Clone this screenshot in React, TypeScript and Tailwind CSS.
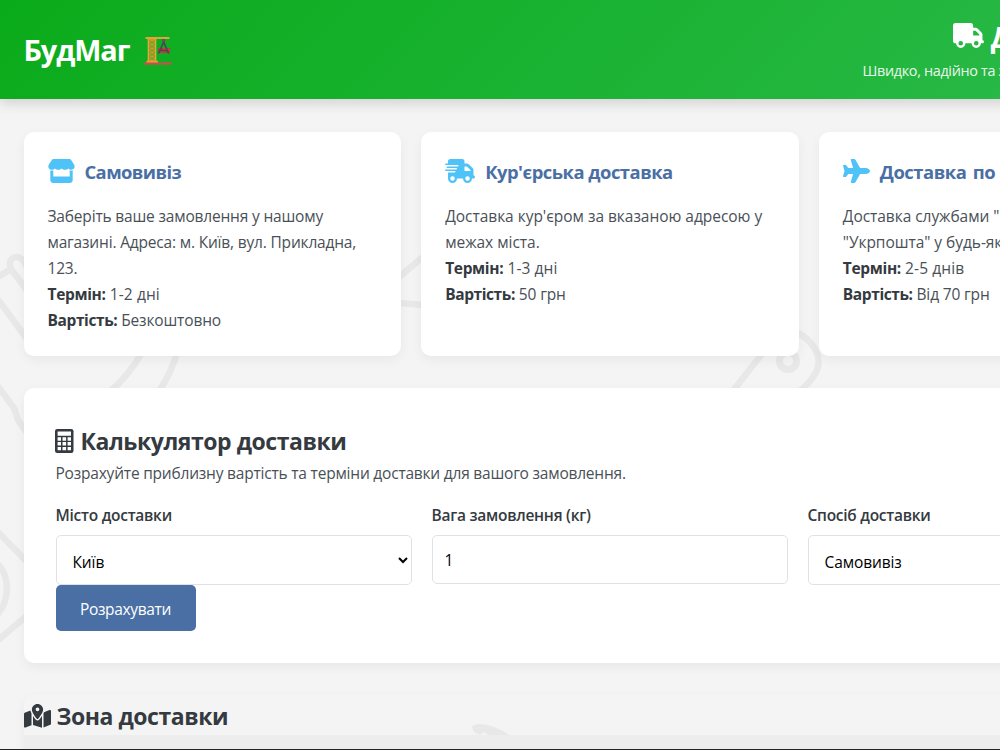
import type { ReactNode } from "react";
import { FaMapLocationDot, FaPlane, FaTruck, FaTruckFast } from "react-icons/fa6";

const methods = [
  {
    title: "Самовивіз",
    icon: <StoreIcon />,
    lines: ["Заберіть ваше замовлення у нашому", "магазині. Адреса: м. Київ, вул. Прикладна,", "123."],
    titleTracking: "tracking-[-0.6px]",
    tracking: "tracking-[-0.18px]",
    term: "1-2 дні",
    price: "Безкоштовно",
  },
  {
    title: "Кур'єрська доставка",
    icon: <FaTruckFast className="h-6 w-[30px]" />,
    lines: ["Доставка кур'єром за вказаною адресою у", "межах міста."],
    titleTracking: "tracking-[-0.5px]",
    tracking: "tracking-[-0.03px]",
    term: "1-3 дні",
    price: "50 грн",
  },
  {
    title: "Доставка по Україні",
    icon: <FaPlane className="h-6 w-[27px]" />,
    lines: ['Доставка службами "Нова пошта" або', '"Укрпошта" у будь-яке місто України.'],
    titleTracking: "tracking-[-0.45px] [word-spacing:2px]",
    tracking: "tracking-[-0.05px]",
    term: "2-5 днів",
    price: "Від 70 грн",
  },
];

function StoreIcon() {
  return (
    <svg viewBox="0 0 27 24" className="h-6 w-[27px]" fill="currentColor">
      <path d="M5.4 0h16.2c.6 0 1.1.3 1.4.8l3 4.8c1.5 2.3.2 5-2.5 5.2-1.3.1-2.4-.4-3.2-1.3-.7.8-1.8 1.3-3.3 1.3-1.4 0-2.6-.5-3.4-1.3-.8.8-2 1.3-3.4 1.3-1.5 0-2.6-.5-3.4-1.3-.8.9-1.9 1.4-3.3 1.3C.8 10.6-.5 7.9.9 5.6L4 .8c.3-.5.8-.8 1.4-.8z" />
      <path d="M2.3 11.3c.9.4 2 .4 3 .1v6.100h16.400v-6.100c1 .3 2 .3 3-.1V21c0 1.700-1.300 3-3 3H5.300c-1.700 0-3-1.300-3-3z" />
    </svg>
  );
}

function CalculatorIcon() {
  return (
    <svg viewBox="0 0 19 24" className="-ml-px h-6 w-[19px]">
      <rect width="18.5" height="24" rx="2.2" fill="#343a40" />
      <path
        d="M2.6 2.5H16v4.2H2.6zM2.6 8.3H6v3.4H2.6zM7.5 8.3h3.6v3.4H7.5zM12.6 8.3H16v3.4h-3.4zM2.6 13.1H6v3.4H2.6zM7.5 13.1h3.6v3.4H7.5zM12.6 13.1H16v3.4h-3.4zM2.6 17.9H6v3.4H2.6zM7.5 17.9h3.6v3.4H7.5zM12.6 17.9H16v3.4h-3.4z"
        fill="#fff"
      />
    </svg>
  );
}

function CraneIcon() {
  return (
    <svg viewBox="0 0 30 30" className="mt-1 ml-[14px] h-[30px] w-[30px]">
      <path d="M15 12h12v5H15z" fill="#c33a3f" />
      <path d="M5 3h8v23H5z" fill="#c99a2b" />
      <path d="M5.5 4.5l7 4-7 4 7 4-7 4 7 4M12.5 4.5l-7 4 7 4-7 4 7 4-7 4" fill="none" stroke="#5fa32a" strokeWidth="0.9" />
      <path d="M5.3 3v23M12.7 3v23" stroke="#e8ab35" strokeWidth="1.2" />
      <path d="M2.5 1h24v2h-24z" fill="#e3a432" />
      <path d="M3.5 24.8H15v2H3.5z" fill="#e3a432" />
      <path d="M.8 26.600h28v2H.8z" fill="#dd4650" />
      <path d="M20.6 3v3" stroke="#4b5b62" strokeWidth="3" />
      <path d="M20.6 6l-5 11.500M20.6 6l5 11.500M17 14l8 1" fill="none" stroke="#4a4652" strokeWidth="1.7" />
    </svg>
  );
}

// Faint outlines of tools behind the content
function ToolsPattern() {
  return (
    <svg viewBox="0 0 1000 750" className="absolute inset-0 -z-10 h-[750px] w-[1000px]" fill="none" stroke="#e8e8e8" strokeWidth="6.5">
      <path d="M-4 278L11 269C6 257 19 253 24 262L32 276M11 269L34 300M-6 294L30 343" />
      <path d="M-6 381L14 408L18 420L32 440" />
      <path d="M142 352Q130 375 108 393M177 352Q173 370 158 393" />
      <path d="M398 278L424 256M398 303L424 305" />
      <path d="M772 341L732 392M796 332C815 341 822 358 817 370Q812 382 798 392" />
      <circle cx="788" cy="361" r="8.5" strokeWidth="7" />
      <path d="M-4 530L30 565M-4 562C10 575 11 600 -4 616M-4 642L30 613" />
      <path d="M474 732L472 727Q474 724 480 724Q496 725 509 735L488 735L484 732L480 735Z" fill="#e8e8e8" stroke="none" />
    </svg>
  );
}

function Field({ label, children }: { label: string; children: ReactNode }) {
  return (
    <div className="flex w-[356px] flex-col items-start">
      <label className="mb-[7px] leading-[25.5px] font-semibold tracking-[-0.26px] text-[#343a40]">{label}</label>
      {children}
    </div>
  );
}

export default function App() {
  return (
    <div className="relative isolate h-[750px] w-[1000px] overflow-hidden bg-[#f4f4f4] font-['Open_Sans','Noto_Sans',sans-serif] text-[15.5px] whitespace-nowrap text-[#495057]">
      <ToolsPattern />
      <div className="w-[1220px]">
        <header className="flex h-[98.5px] items-center justify-between bg-linear-[135deg,#0aab1a,#2dbb4e] px-[23.5px] text-white shadow-[0_4px_12px_rgba(0,0,0,0.15)]">
          <div className="flex items-center">
            <span className="text-[28.8px] font-bold tracking-[-1.05px]">БудМаг</span>
            <CraneIcon />
          </div>
          <div className="flex w-[334px] flex-col items-center">
            <h1 className="flex items-center gap-[7px] pb-1 pl-[22px] text-[28px] leading-10 font-bold">
              <FaTruck className="mb-[2px] h-[25px] w-[31px]" />
              <span className="pt-[2px]">Доставка</span>
            </h1>
            <p className="-mt-[2px] w-full text-[14.4px] leading-6 tracking-[-0.33px] opacity-90">Швидко, надійно та зручно по всій Україні</p>
          </div>
        </header>

        <main className="flex flex-col gap-8 px-[23.5px] pt-[33.5px]">
          <section className="grid grid-cols-3 gap-5">
            {methods.map((method) => (
              <article key={method.title} className="h-[224px] rounded-[10px] bg-white p-6 shadow-[0_4px_12px_rgba(0,0,0,0.05)]">
                <h3 className="mb-4 flex h-[31px] items-center gap-[10px] text-[18.4px] font-bold text-[#4a6fa5]">
                  <span className="pb-[2px] text-[#4fc3f7]">{method.icon}</span>
                  <span className={method.titleTracking}>{method.title}</span>
                </h3>
                <div className="leading-[26px]">
                  {method.lines.map((line) => (
                    <p key={line} className={method.tracking}>{line}</p>
                  ))}
                  <p className="tracking-[0.1px]">
                    <strong className="tracking-[-0.33px] text-[#343a40]">Термін:</strong> {method.term}
                  </p>
                  <p className="tracking-[-0.15px]">
                    <strong className="tracking-[-0.4px] text-[#343a40]">Вартість:</strong> {method.price}
                  </p>
                </div>
              </article>
            ))}
          </section>

          <section className="h-[275px] rounded-[10px] bg-white px-8 pt-8 shadow-[0_4px_12px_rgba(0,0,0,0.05)]">
            <h2 className="flex h-[41px] items-center gap-[7px] text-[23px] font-bold tracking-[-0.45px] text-[#343a40]">
              <CalculatorIcon />
              <span className="pt-[2px]">Калькулятор доставки</span>
            </h2>
            <p className="leading-[25.5px] tracking-[-0.21px]">Розрахуйте приблизну вартість та терміни доставки для вашого замовлення.</p>
            <form className="mt-4">
              <div className="flex gap-5">
                <Field label="Місто доставки">
                  <select className="h-[50px] w-full rounded-[5px] border border-[#dee2e6] bg-white px-3 pt-[14px] pb-3 tracking-[-0.1px] text-black">
                    <option>Київ</option>
                    <option>Львів</option>
                    <option>Одеса</option>
                  </select>
                </Field>
                <Field label="Вага замовлення (кг)">
                  <input type="number" defaultValue="1" className="h-[48.5px] w-full rounded-[5px] border border-[#dee2e6] bg-white px-3 pt-[14px] pb-3 text-black" />
                </Field>
                <Field label="Спосіб доставки">
                  <select className="h-[50px] w-full rounded-[5px] border border-[#dee2e6] bg-white px-3 pt-[14px] pb-3 tracking-[-0.1px] text-black">
                    <option>Самовивіз</option>
                    <option>Кур'єрська доставка</option>
                  </select>
                </Field>
              </div>
              <button type="button" className="h-[46px] w-[140px] rounded-[5px] bg-[#4a6fa5] pt-[3px] tracking-[-0.33px] text-white">
                Розрахувати
              </button>
            </form>
          </section>

          <section className="h-[120px] overflow-hidden rounded-[10px] shadow-[0_4px_12px_rgba(0,0,0,0.05)]">
            <h2 className="flex h-10 items-center gap-[6px] text-[23px] font-bold tracking-[-0.45px] text-[#343a40]">
              <FaMapLocationDot className="mt-px h-6 w-[27px]" />
              <span className="pt-[2px]">Зона доставки</span>
            </h2>
            <div className="h-20 bg-[#ededed]" />
          </section>
        </main>
      </div>
      <div className="absolute inset-x-0 bottom-0 h-px bg-[#222]" />
    </div>
  );
}
